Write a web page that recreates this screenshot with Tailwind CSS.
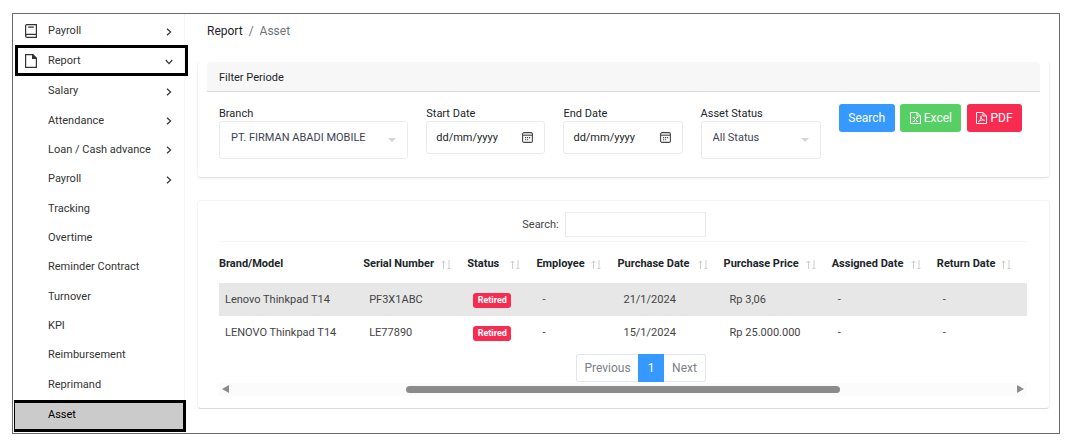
<!DOCTYPE html>
<html lang="en">
  <head>
    <meta charset="UTF-8" />
    <meta name="viewport" content="width=device-width, initial-scale=1.0" />
    <title>Report / Asset</title>
    <script src="https://cdn.jsdelivr.net/npm/@tailwindcss/browser@4"></script>
  </head>
  <body class="bg-white pl-3 pr-[13px] pt-[13px] pb-1 font-[Roboto,sans-serif] text-[12px] text-[#212529]">
    <!-- Shared icons -->
    <svg class="hidden">
      <symbol id="chevron" viewBox="0 0 8 8"><path d="M2 0.8 5.6 4 2 7.2" fill="none" stroke="currentColor" stroke-width="1.2" /></symbol>
      <symbol id="caret" viewBox="0 0 8 4"><path d="M0 0h8L4 4z" fill="currentColor" /></symbol>
      <symbol id="sort" viewBox="0 0 10 9">
        <path d="M2.5 9V1M0.5 3l2-2 2 2M8 0v8.5M6.5 8.5h3" fill="none" stroke="currentColor" stroke-width="0.9" />
      </symbol>
      <symbol id="calendar" viewBox="0 0 11 11">
        <rect x="0.6" y="0.6" width="9.8" height="9.8" rx="1.5" fill="none" stroke="currentColor" stroke-width="1.1" />
        <path d="M1 3.2h9" stroke="currentColor" stroke-width="1.1" />
        <path d="M3 5.6h1.2M5 5.6h1.2M7 5.6h1.2M3 7.8h1.2M5 7.8h1.2" stroke="currentColor" stroke-width="1.1" />
      </symbol>
    </svg>

    <div class="flex border border-[#6b6b6b]">
      <!-- Sidebar -->
      <nav class="w-[172px] shrink-0 flex flex-col py-px border-r border-[#f6f6f6] text-[11px] text-[#333]">
        <a href="#" class="h-[30px] flex items-center pl-3 pr-[11px] pt-[3px]">
          <svg class="w-3 h-[14px] mr-[11px] mb-0.5" viewBox="0 0 12 14" fill="none" stroke="#333" stroke-width="1.2">
            <path d="M1.8 0.6h9.6v12.8H2.2A1.6 1.6 0 0 1 0.6 11.8V1.8A1.2 1.2 0 0 1 1.8 0.6zM0.8 11.4q0.4-1 1.4-1h9.2M3.2 3.2h5.6" />
          </svg>
          <span class="flex-1">Payroll</span>
          <svg class="w-2 h-2"><use href="#chevron" /></svg>
        </a>
        <a href="#" class="h-[31px] ml-0.5 -mr-1 flex items-center pl-[7px] pr-3 pt-0.5 border-3 border-black">
          <svg class="w-3 h-[14px] mr-[11px] mb-0.5" viewBox="0 0 12 14" fill="none" stroke="#333" stroke-width="1.2">
            <path d="M0.6 0.6h7.2l3.6 3.6v9.2H0.6z" />
            <path d="M7.6 0.6v3.8h3.8z" fill="#333" />
          </svg>
          <span class="flex-1">Report</span>
          <svg class="w-2 h-2 rotate-90"><use href="#chevron" /></svg>
        </a>
        <div class="flex-1 flex flex-col pt-px">
          <a href="#" class="flex-1 flex items-center pl-[35px] pr-[11px]"><span class="flex-1">Salary</span><svg class="w-2 h-2"><use href="#chevron" /></svg></a>
          <a href="#" class="flex-1 flex items-center pl-[35px] pr-[11px]"><span class="flex-1">Attendance</span><svg class="w-2 h-2"><use href="#chevron" /></svg></a>
          <a href="#" class="flex-1 flex items-center pl-[35px] pr-[11px]"><span class="flex-1">Loan / Cash advance</span><svg class="w-2 h-2"><use href="#chevron" /></svg></a>
          <a href="#" class="flex-1 flex items-center pl-[35px] pr-[11px]"><span class="flex-1">Payroll</span><svg class="w-2 h-2"><use href="#chevron" /></svg></a>
          <a href="#" class="flex-1 flex items-center pl-[35px]">Tracking</a>
          <a href="#" class="flex-1 flex items-center pl-[35px]">Overtime</a>
          <a href="#" class="flex-1 flex items-center pl-[35px]">Reminder Contract</a>
          <a href="#" class="flex-1 flex items-center pl-[35px]">Turnover</a>
          <a href="#" class="flex-1 flex items-center pl-[35px]">KPI</a>
          <a href="#" class="flex-1 flex items-center pl-[35px]">Reimbursement</a>
          <a href="#" class="flex-1 flex items-center pl-[35px]">Reprimand</a>
        </div>
        <a href="#" class="h-8 ml-px -mr-0.5 flex items-center pl-[33px] pb-px border-3 border-l border-black bg-[#cbcbcb] text-black">Asset</a>
      </nav>

      <main class="flex-1 min-w-0 pl-3 pr-[9px] pb-6">
        <div class="h-12 pt-2 pl-[10px] leading-[18px] text-[#6c757d]">
          <a href="#" class="text-[#212529]">Report</a><span class="px-1.5">/</span>Asset
        </div>

        <!-- Filter -->
        <section class="rounded border border-t-0 border-[#f3f3f3] border-b-[#e3e3e3] shadow-xs pb-[18px]">
          <h2 class="mx-[9px] px-3 h-[30px] leading-[31px] rounded-t bg-[#f7f7f7] border-b border-[#d9d9d9] text-[11px]">Filter Periode</h2>
          <form class="grid grid-cols-[minmax(0,189fr)_minmax(0,119fr)_minmax(0,119fr)_minmax(0,120fr)_minmax(0,183fr)] gap-[18px] items-start pl-[21px] pr-[27px] pt-3 text-[11px]">
            <div>
              <label for="branch" class="block h-[17px] leading-[19px]">Branch</label>
              <div class="relative">
                <select id="branch" class="appearance-none block w-full h-[38px] pl-[11px] pb-1 rounded-[3px] border border-[#ebebeb] text-[#3f4254]">
                  <option>PT. FIRMAN ABADI MOBILE</option>
                </select>
                <svg class="absolute right-3 top-[17px] w-2 h-1 text-[#d5d5d5] pointer-events-none"><use href="#caret" /></svg>
              </div>
            </div>
            <div>
              <label for="start" class="block h-[17px] leading-[19px]">Start Date</label>
              <div class="flex items-center h-[33px] px-[9px] rounded-[3px] border border-[#ebebeb]">
                <input id="start" type="text" placeholder="dd/mm/yyyy" class="flex-1 min-w-0 pt-0.5 placeholder:text-[#212529] outline-none" />
                <svg class="w-[11px] h-[11px] mr-[2px] text-[#444]"><use href="#calendar" /></svg>
              </div>
            </div>
            <div>
              <label for="end" class="block h-[17px] leading-[19px]">End Date</label>
              <div class="flex items-center h-[33px] px-[9px] rounded-[3px] border border-[#ebebeb]">
                <input id="end" type="text" placeholder="dd/mm/yyyy" class="flex-1 min-w-0 pt-0.5 placeholder:text-[#212529] outline-none" />
                <svg class="w-[11px] h-[11px] mr-[2px] text-[#444]"><use href="#calendar" /></svg>
              </div>
            </div>
            <div>
              <label for="status" class="block h-[17px] leading-[19px]">Asset Status</label>
              <div class="relative">
                <select id="status" class="appearance-none block w-full h-[38px] pl-[11px] pb-1 rounded-[3px] border border-[#ebebeb] text-[#3f4254]">
                  <option>All Status</option>
                </select>
                <svg class="absolute right-3 top-[17px] w-2 h-1 text-[#d5d5d5] pointer-events-none"><use href="#caret" /></svg>
              </div>
            </div>
            <div class="flex justify-between text-[12px] text-white">
              <button type="button" class="w-14 h-7 rounded-[3px] bg-[#3699ff]">Search</button>
              <button type="button" class="w-[61px] h-7 rounded-[3px] bg-[#56cf65] flex items-center justify-center gap-[3px]">
                <svg class="w-[11px] h-3" viewBox="0 0 11 12" fill="none" stroke="#fff" stroke-width="1">
                  <path d="M0.5 0.5h6.5l3.5 3.5v7.5h-10zM7 0.5v3.5h3.5M3.5 5.5l4 4M7.5 5.5l-4 4M2.8 5.5h1.8M6.4 5.5h1.8M2.8 9.5h1.8M6.4 9.5h1.8" />
                </svg>
                Excel
              </button>
              <button type="button" class="w-[55px] h-7 rounded-[3px] bg-[#f82b50] flex items-center justify-center gap-[3px]">
                <svg class="w-[11px] h-3" viewBox="0 0 11 12" fill="none" stroke="#fff" stroke-width="1">
                  <path d="M0.5 0.5h6.5l3.5 3.5v7.5h-10zM7 0.5v3.5h3.5" />
                  <path d="M2.4 9.8C4 9 5.2 6 5 3.8 4.8 6.4 6.4 8.4 8.8 8.4 6.8 7.6 4 8.2 2.4 9.8z" stroke-width="0.8" />
                </svg>
                PDF
              </button>
            </div>
          </form>
        </section>

        <!-- Asset list -->
        <section class="mt-[22px] rounded border border-[#f3f3f3] border-b-[#d9d9d9] pt-[11px] pb-3 pl-[21px] pr-[22px]">
          <div class="flex items-center justify-center gap-1.5 mb-1 mr-[18px] text-[11px] text-[#444]">
            <label for="search" class="pt-0.5">Search:</label>
            <input id="search" type="text" class="w-[141px] h-[25px] border border-[#ebebeb]" />
          </div>

          <table class="w-full table-fixed text-left border-t border-[#f6f6f6] text-[11px] whitespace-nowrap">
            <colgroup>
              <col class="w-[144px]" />
              <col class="w-[104px]" />
              <col class="w-[69px]" />
              <col class="w-[81px]" />
              <col class="w-[106px]" />
              <col class="w-[108px]" />
              <col class="w-[105px]" />
              <col class="w-[90px]" />
            </colgroup>
            <thead>
              <tr class="h-[41px]">
                <th class="pt-[3px] font-bold">Brand/Model</th>
                <th class="pt-[3px] font-bold"><div class="flex items-center justify-between pr-4">Serial Number<svg class="w-[10px] h-[9px] mt-0.5 text-[#c8c8c8]"><use href="#sort" /></svg></div></th>
                <th class="pt-[3px] font-bold"><div class="flex items-center justify-between pr-4">Status<svg class="w-[10px] h-[9px] mt-0.5 text-[#c8c8c8]"><use href="#sort" /></svg></div></th>
                <th class="pt-[3px] font-bold"><div class="flex items-center justify-between pr-4">Employee<svg class="w-[10px] h-[9px] mt-0.5 text-[#c8c8c8]"><use href="#sort" /></svg></div></th>
                <th class="pt-[3px] font-bold"><div class="flex items-center justify-between pr-4">Purchase Date<svg class="w-[10px] h-[9px] mt-0.5 text-[#c8c8c8]"><use href="#sort" /></svg></div></th>
                <th class="pt-[3px] font-bold"><div class="flex items-center justify-between pr-4">Purchase Price<svg class="w-[10px] h-[9px] mt-0.5 text-[#c8c8c8]"><use href="#sort" /></svg></div></th>
                <th class="pt-[3px] font-bold"><div class="flex items-center justify-between pr-4">Assigned Date<svg class="w-[10px] h-[9px] mt-0.5 text-[#c8c8c8]"><use href="#sort" /></svg></div></th>
                <th class="pt-[3px] font-bold"><div class="flex items-center justify-between pr-4">Return Date<svg class="w-[10px] h-[9px] mt-0.5 text-[#c8c8c8]"><use href="#sort" /></svg></div></th>
              </tr>
            </thead>
            <tbody class="text-[#444]">
              <tr class="h-[33px] bg-[#e7e7e7]">
                <td class="pl-1.5 pt-[3px]">Lenovo Thinkpad T14</td>
                <td class="pl-1.5 pt-[3px]">PF3X1ABC</td>
                <td class="pl-1.5 pt-[3px]"><span class="inline-block align-middle w-[38px] h-[15px] leading-[15px] text-center rounded-[3px] bg-[#f82b50] text-white text-[9px] font-bold">Retired</span></td>
                <td class="pl-1.5 pt-[3px]">-</td>
                <td class="pl-1.5 pt-[3px]">21/1/2024</td>
                <td class="pl-1.5 pt-[3px]">Rp 3,06</td>
                <td class="pl-1.5 pt-[3px]">-</td>
                <td class="pl-1.5 pt-[3px]">-</td>
              </tr>
              <tr class="h-[33px]">
                <td class="pl-1.5 pt-[3px]">LENOVO Thinkpad T14</td>
                <td class="pl-1.5 pt-[3px]">LE77890</td>
                <td class="pl-1.5 pt-[3px]"><span class="inline-block align-middle w-[38px] h-[15px] leading-[15px] text-center rounded-[3px] bg-[#f82b50] text-white text-[9px] font-bold">Retired</span></td>
                <td class="pl-1.5 pt-[3px]">-</td>
                <td class="pl-1.5 pt-[3px]">15/1/2024</td>
                <td class="pl-1.5 pt-[3px]">Rp 25.000.000</td>
                <td class="pl-1.5 pt-[3px]">-</td>
                <td class="pl-1.5 pt-[3px]">-</td>
              </tr>
            </tbody>
          </table>

          <div class="flex justify-center mt-[5px] ml-9 text-[#7b8087]">
            <button type="button" class="w-[62px] h-7 rounded-l-[3px] border border-r-0 border-[#e4e6ef]">Previous</button>
            <button type="button" class="w-[26px] h-7 bg-[#3699ff] text-white">1</button>
            <button type="button" class="w-[42px] h-7 rounded-r-[3px] border border-l-0 border-[#e4e6ef]">Next</button>
          </div>

          <!-- Horizontal scroll track -->
          <div class="flex items-center h-[13px] mt-px px-[3px] bg-[#fbfbfb] text-[#8b8b8b]">
            <svg class="w-[7px] h-2" viewBox="0 0 7 8"><path d="M7 0v8L0 4z" fill="currentColor" /></svg>
            <div class="flex-1 px-1.5">
              <div class="ml-[22%] w-[56%] h-[7px] rounded-full bg-[#8b8b8b]"></div>
            </div>
            <svg class="w-[7px] h-2" viewBox="0 0 7 8"><path d="M0 0v8l7-4z" fill="currentColor" /></svg>
          </div>
        </section>
      </main>
    </div>
  </body>
</html>
